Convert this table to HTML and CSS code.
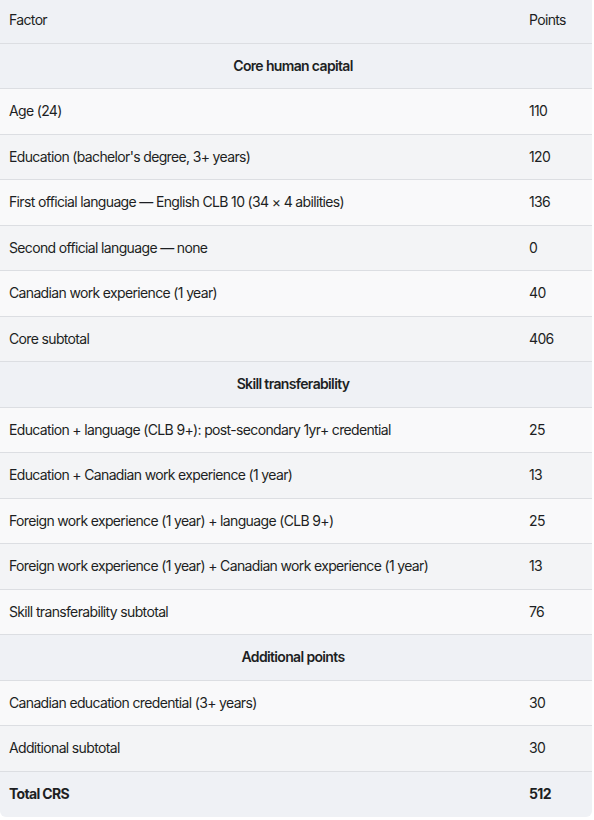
FILE: index.html
```html
<!DOCTYPE html>
<html>
<head>
<meta charset="utf-8">
<link rel="stylesheet" href="styles.css">
</head>
<body>
<div class="wrap">
<table class="crs">
  <thead>
    <tr class="head"><th class="factor">Factor</th><th class="pts">Points</th></tr>
  </thead>
  <tbody>
    <tr class="section"><td colspan="2">Core human capital</td></tr>
    <tr class="odd"><td>Age (24)</td><td>110</td></tr>
    <tr class="even"><td>Education (bachelor's degree, 3+ years)</td><td>120</td></tr>
    <tr class="odd"><td>First official language — English CLB 10 (34 × 4 abilities)</td><td>136</td></tr>
    <tr class="even"><td>Second official language — none</td><td>0</td></tr>
    <tr class="odd"><td>Canadian work experience (1 year)</td><td>40</td></tr>
    <tr class="even"><td>Core subtotal</td><td>406</td></tr>
    <tr class="section"><td colspan="2">Skill transferability</td></tr>
    <tr class="odd"><td>Education + language (CLB 9+): post-secondary 1yr+ credential</td><td>25</td></tr>
    <tr class="even"><td>Education + Canadian work experience (1 year)</td><td>13</td></tr>
    <tr class="odd"><td>Foreign work experience (1 year) + language (CLB 9+)</td><td>25</td></tr>
    <tr class="even"><td>Foreign work experience (1 year) + Canadian work experience (1 year)</td><td>13</td></tr>
    <tr class="odd"><td>Skill transferability subtotal</td><td>76</td></tr>
    <tr class="section"><td colspan="2">Additional points</td></tr>
    <tr class="odd"><td>Canadian education credential (3+ years)</td><td>30</td></tr>
    <tr class="even"><td>Additional subtotal</td><td>30</td></tr>
    <tr class="total"><td>Total CRS</td><td>512</td></tr>
  </tbody>
</table>
</div>
</body>
</html>
```
FILE: styles.css
```css
html, body {
  margin: 0;
  padding: 0;
  background: #ffffff;
}
body {
  font-family: Inter, "Noto Sans", sans-serif;
  font-size: 14px;
  letter-spacing: -0.65px;
  color: #1d1f23;
}
.wrap {
  width: 592px;
  border-radius: 0 0 6px 6px;
  overflow: hidden;
}
.crs {
  width: 100%;
  border-collapse: collapse;
  table-layout: fixed;
}
.crs th, .crs td {
  text-align: left;
  font-weight: 400;
  padding: 0 9px;
  height: 45.5px;
  border-top: 1px solid #dcdee2;
  box-sizing: border-box;
  line-height: 20px;
}
.crs .head th {
  height: 43px;
  border-top: none;
  background: #eff1f5;
  padding-bottom: 3px;
}
.crs .factor { width: 520px; }
.crs .section td {
  background: #eff1f5;
  text-align: center;
  font-weight: 600;
  padding-left: 0;
  padding-right: 6px;
}
.crs .odd td { background: #f9f9fa; }
.crs .even td { background: #f3f4f6; }
.crs .total td {
  background: #eff1f5;
  font-weight: 700;
}
```
